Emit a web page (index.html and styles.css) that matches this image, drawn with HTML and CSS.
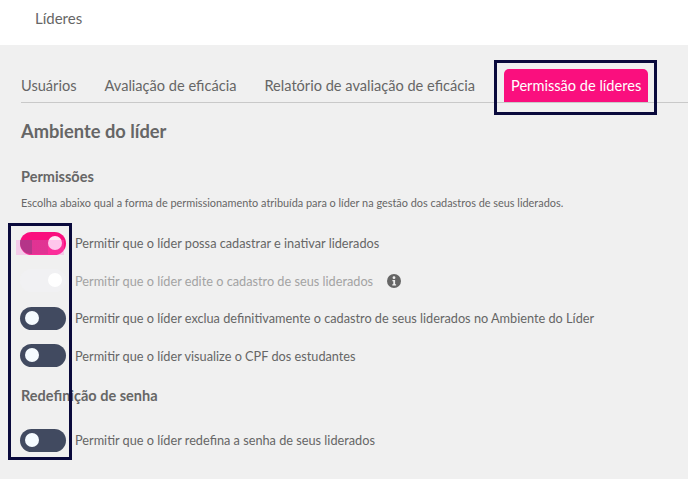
FILE: index.html
```html
<!DOCTYPE html>
<html lang="pt-BR">
<head>
  <meta charset="UTF-8" />
  <meta name="viewport" content="width=device-width, initial-scale=1.0"/>
  <title>Líderes</title>
  <link rel="stylesheet" href="styles.css">
</head>
<body>

  <header class="top-bar">Líderes</header>

  <main class="content">
    <nav class="tabs">
      <a class="tab">Usuários</a>
      <a class="tab">Avaliação de eficácia</a>
      <a class="tab">Relatório de avaliação de eficácia</a>
      <a class="tab active">Permissão de líderes</a>
    </nav>

    <h1 class="page-title">Ambiente do líder</h1>

    <h2 class="group-title">Permissões</h2>
    <p class="group-text">Escolha abaixo qual a forma de permissionamento atribuída para o líder na gestão dos cadastros de seus liderados.</p>

    <div class="option">
      <span class="toggle on"></span>
      <span class="label">Permitir que o líder possa cadastrar e inativar liderados</span>
    </div>
    <div class="option disabled">
      <span class="toggle on"></span>
      <span class="label">Permitir que o líder edite o cadastro de seus liderados</span>
      <svg class="info" viewBox="0 0 14 14" width="14" height="14" aria-hidden="true">
        <circle cx="7" cy="7" r="7" fill="#666"/>
        <circle cx="7" cy="3.7" r="1.4" fill="#f0f0f0"/>
        <path d="M5.4 6h2.7v4.2h1v1.2H5.3v-1.2h1V7.2h-.9z" fill="#f0f0f0"/>
      </svg>
    </div>
    <div class="option">
      <span class="toggle"></span>
      <span class="label">Permitir que o líder exclua definitivamente o cadastro de seus liderados no Ambiente do Líder</span>
    </div>
    <div class="option">
      <span class="toggle"></span>
      <span class="label">Permitir que o líder visualize o CPF dos estudantes</span>
    </div>

    <h2 class="group-title reset">Redefinição de senha</h2>

    <div class="option">
      <span class="toggle"></span>
      <span class="label">Permitir que o líder redefina a senha de seus liderados</span>
    </div>
  </main>

  <!-- marcações por cima da tela -->
  <div class="mark mark-tab"></div>
  <div class="mark mark-toggles"></div>
  <div class="mark-tint"></div>
  <div class="mark-tint-dark"></div>

</body>
</html>
```

FILE: styles.css
```css
* {
  margin: 0;
  padding: 0;
  box-sizing: border-box;
}

html, body {
  height: 100%;
}

body {
  position: relative;
  font-family: 'Lato', sans-serif;
  background: #f0f0f0;
  color: #666;
  overflow: hidden;
}

.top-bar {
  height: 45px;
  padding: 9px 0 0 35px;
  background: #fff;
  font-size: 15px;
  line-height: 18px;
}

.content {
  padding: 0 0 0 21px;
}

.tabs {
  display: flex;
  align-items: flex-end;
  gap: 28px;
  height: 58px;
  border-bottom: 1px solid #c9c9c9;
}

.tab {
  font-size: 14.6px;
  line-height: 18px;
  padding-bottom: 7px;
}

.tab.active {
  margin-left: 1px;
  padding: 8px 7px 7px;
  height: 33px;
  background: #fa0f7e;
  color: #fff;
  border-radius: 5px 5px 0 0;
}

.page-title {
  margin-top: 17px;
  font-size: 18.3px;
  line-height: 22px;
  font-weight: 700;
}

.group-title {
  margin-top: 26px;
  font-size: 14.5px;
  line-height: 17px;
  font-weight: 700;
}

.group-text {
  margin-top: 11px;
  font-size: 10.9px;
  line-height: 14px;
}

.option {
  display: flex;
  align-items: center;
  gap: 9px;
  height: 23px;
  margin-top: 14.5px;
  margin-left: -1px;
  font-size: 12.72px;
}

.group-text + .option {
  margin-top: 21.5px;
}

.group-title.reset {
  margin-top: 19.5px;
}

.group-title.reset + .option {
  margin-top: 25px;
}

.toggle {
  position: relative;
  flex: none;
  width: 46px;
  height: 23px;
  border-radius: 12px;
  background: #414a60;
}

.toggle::after {
  content: "";
  position: absolute;
  top: 4px;
  left: 5px;
  width: 14px;
  height: 14px;
  border-radius: 50%;
  background: #f5fbff;
}

.toggle.on {
  background: #fa0f7e;
}

.toggle.on::after {
  left: 28px;
  background: #ffe8f4;
}

.option.disabled {
  color: #a3a3a3;
}

.option.disabled .toggle {
  background: #f1f1f3;
}

.option.disabled .toggle::after {
  background: #fff;
}

.info {
  margin-left: 5px;
}

.mark {
  position: absolute;
  border: 3px solid #0a0a3c;
  pointer-events: none;
}

.mark-tab {
  left: 494px;
  top: 60px;
  width: 163px;
  height: 55px;
}

.mark-toggles {
  left: 8px;
  top: 223px;
  width: 64px;
  height: 237px;
}

/* resíduo rosa da marcação sobre o primeiro toggle */
.mark-tint {
  position: absolute;
  left: 16px;
  top: 240px;
  width: 48px;
  height: 15px;
  background: rgba(255, 120, 220, 0.3);
  pointer-events: none;
}

.mark-tint-dark {
  position: absolute;
  left: 20px;
  top: 240px;
  width: 28px;
  height: 14px;
  border-radius: 0 0 0 11px;
  background: linear-gradient(to right, rgba(110, 60, 120, 0.5) 12px, rgba(120, 70, 120, 0.2) 12px);
  pointer-events: none;
}
```
